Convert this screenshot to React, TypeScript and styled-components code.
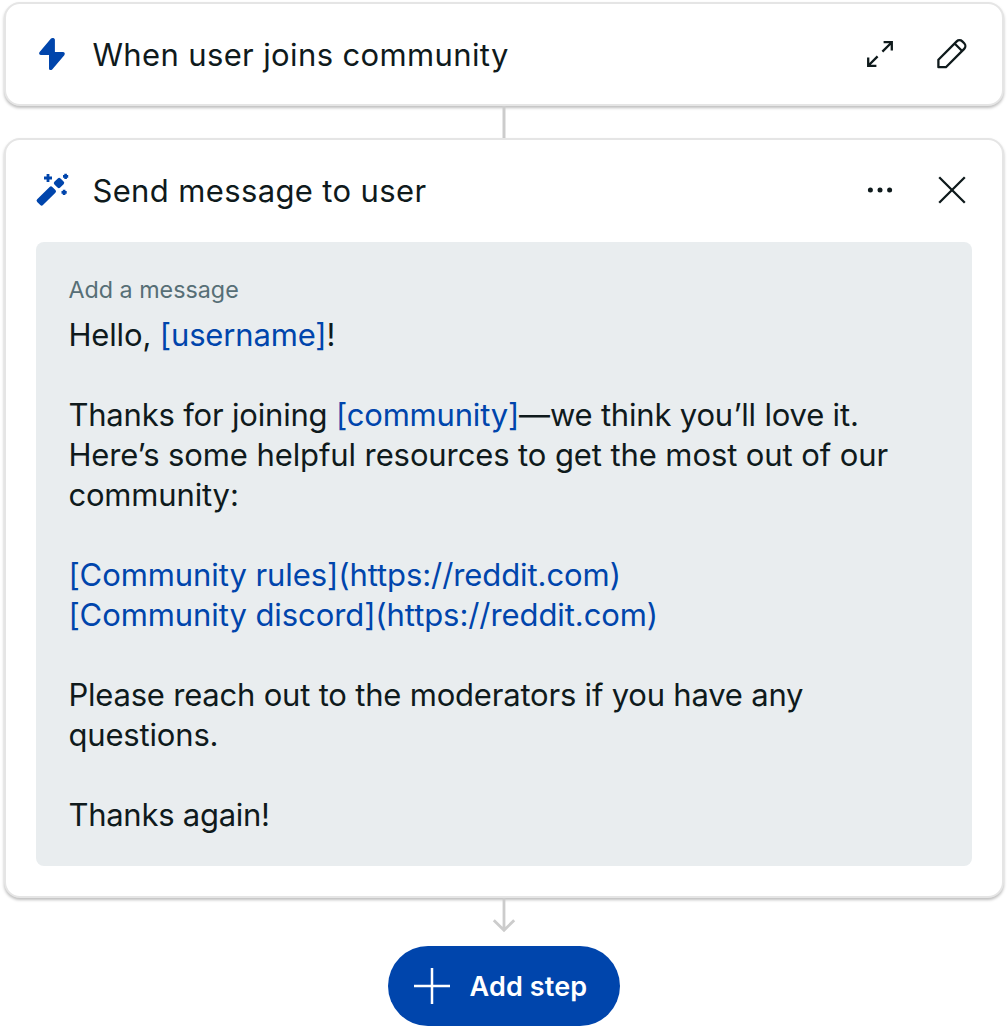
import React from 'react';
import styled, { createGlobalStyle } from 'styled-components';

const BLUE = '#0045ac';
const INK = '#0f1a1c';

const GlobalStyle = createGlobalStyle`
  *, *::before, *::after { box-sizing: border-box; }
  body { margin: 0; background: #fff; overflow: hidden; }
`;

const Flow = styled.main`
  width: 1008px;
  height: 1026px;
  padding: 2px 4px 0;
  display: flex;
  flex-direction: column;
  align-items: center;
  font-family: Inter, 'Liberation Sans', sans-serif;
  color: ${INK};
`;

const Card = styled.section<{ $height: number }>`
  width: 1000px;
  height: ${p => p.$height}px;
  flex: none;
  padding: 0 30px;
  border: 2px solid #e5e5e5;
  border-radius: 16px;
  background: #fff;
  box-shadow: 0 2px 3px rgba(0, 0, 0, 0.26);
`;

const CardHeader = styled.header`
  height: 100px;
  padding-right: 4px;
  display: flex;
  align-items: center;
`;

const Title = styled.h2`
  flex: 1;
  margin: 0 0 0 24.4px;
  padding-top: 2px;
  font-size: 31px;
  line-height: 40px;
  font-weight: 400;
  letter-spacing: 0.37px;
  white-space: nowrap;
`;

const Actions = styled.div`
  display: flex;
  gap: 40px;
`;

const IconButton = styled.button`
  width: 32px;
  height: 32px;
  padding: 0;
  border: 0;
  background: none;
  color: ${INK};
`;

const Icon = styled.svg`
  display: block;
  flex: none;
  overflow: visible;
`;

const Message = styled.div`
  height: 624px;
  margin-top: 2px;
  padding: 32px 32px 32px 32.4px;
  border-radius: 8px;
  background: #e9edef;
`;

const Label = styled.div`
  height: 32px;
  margin-bottom: 9px;
  color: #576f76;
  font-size: 23.3px;
  line-height: 32px;
`;

const Line = styled.div<{ $spacing?: number; $link?: boolean }>`
  height: 40px;
  font-size: 31px;
  line-height: 40px;
  letter-spacing: ${p => p.$spacing ?? 0}px;
  color: ${p => (p.$link ? BLUE : 'inherit')};
  white-space: nowrap;
`;

const Token = styled.span`
  color: ${BLUE};
`;

const ConnectorSlot = styled.div`
  height: 32px;
  flex: none;
`;

const ArrowSlot = styled.div`
  height: 48px;
  flex: none;
`;

const AddButton = styled.button`
  width: 232px;
  height: 80px;
  flex: none;
  display: flex;
  align-items: center;
  gap: 19.5px;
  padding: 0 0 0 26px;
  border: 0;
  border-radius: 40px;
  background: ${BLUE};
  color: #fff;
  font: 600 27px/36px Inter, 'Liberation Sans', sans-serif;
  letter-spacing: 0.15px;
  white-space: nowrap;
`;

const ButtonText = styled.span`
  padding-top: 2px;
`;

const Bolt = () => (
  <Icon width="32" height="32" viewBox="0 0 32 32" fill={BLUE}>
    <path d="M15 .6 3.600 14C2.500 15.300 3.300 17 5 17h8v13.500c0 1.700 2.100 2.100 3.200.9l12.100-14.200c1.100-1.400.3-3.200-1.400-3.200h-8V1.700C18.900 0 16.100-.7 15 .6Z" />
  </Icon>
);

const Wand = () => (
  <Icon width="32" height="32" viewBox="0 0 32 32" fill={BLUE}>
    <rect x="-4.100" y="-10.700" width="8.200" height="21.400" rx="1.900" transform="translate(10.300 22) rotate(45)" />
    <rect x="-4.100" y="-4.300" width="8.200" height="8.600" rx="1.900" transform="translate(23 9) rotate(45)" />
    <path d="M10.600 0h2.800v2.600H16v2.800h-2.600V8h-2.800V5.400H8V2.600h2.600ZM28.300-.2h2.600v1.300h1.300v2.600h-1.300V5h-2.600V3.700H27V1.100h1.300ZM26.800 15.800h2.600v1.300h1.300v2.600h-1.300V21h-2.600v-1.300h-1.300v-2.600h1.300Z" />
  </Icon>
);

const Expand = () => (
  <Icon width="32" height="32" viewBox="0 0 32 32" fill="none" stroke="currentColor" strokeWidth="2.300">
    <path d="M18.400 13.600 27.800 4.200M19.600 4.200h8.200v8.200M13.600 18.400 4.200 27.800M12.400 27.800H4.200v-8.200" />
  </Icon>
);

const Pencil = () => (
  <Icon width="32" height="32" viewBox="0 0 32 32" fill="none" stroke="currentColor" strokeWidth="2.300" strokeLinejoin="round">
    <path d="M2.400 29.200V21.700L20.700 3.400a4 4 0 0 1 5.600 0l1.900 1.900a4 4 0 0 1 0 5.600L9.900 29.200ZM18.600 5.500l7.500 7.500" />
  </Icon>
);

const More = () => (
  <Icon width="32" height="32" viewBox="0 0 32 32" fill="currentColor">
    <circle cx="6.400" cy="16" r="2.500" />
    <circle cx="16" cy="16" r="2.500" />
    <circle cx="25.600" cy="16" r="2.500" />
  </Icon>
);

const Close = () => (
  <Icon width="32" height="32" viewBox="0 0 32 32" fill="none" stroke="currentColor" strokeWidth="2.300">
    <path d="m3.200 3.200 25.600 25.600M28.800 3.200 3.200 28.800" />
  </Icon>
);

export default function App() {
  return (
    <>
      <GlobalStyle />
      <Flow>
        <Card $height={104}>
          <CardHeader>
            <Bolt />
            <Title>When user joins community</Title>
            <Actions>
              <IconButton aria-label="Expand"><Expand /></IconButton>
              <IconButton aria-label="Edit"><Pencil /></IconButton>
            </Actions>
          </CardHeader>
        </Card>
        <ConnectorSlot>
          <Icon width="24" height="32" viewBox="0 0 24 32" stroke="#ccc" strokeWidth="3">
            <path d="M12 0v32" />
          </Icon>
        </ConnectorSlot>
        <Card $height={760}>
          <CardHeader>
            <Wand />
            <Title>Send message to user</Title>
            <Actions>
              <IconButton aria-label="More"><More /></IconButton>
              <IconButton aria-label="Close"><Close /></IconButton>
            </Actions>
          </CardHeader>
          <Message>
            <Label>Add a message</Label>
            <Line $spacing={-0.14}>Hello, <Token>[username]</Token>!</Line>
            <Line />
            <Line $spacing={-0.19}>Thanks for joining <Token>[community]</Token>—we think you’ll love it.</Line>
            <Line $spacing={-0.1}>Here’s some helpful resources to get the most out of our</Line>
            <Line $spacing={-0.16}>community:</Line>
            <Line />
            <Line $link $spacing={-0.08}>[Community rules](https://reddit.com)</Line>
            <Line $link $spacing={-0.08}>[Community discord](https://reddit.com)</Line>
            <Line />
            <Line $spacing={-0.2}>Please reach out to the moderators if you have any</Line>
            <Line $spacing={-0.16}>questions.</Line>
            <Line />
            <Line $spacing={-0.26}>Thanks again!</Line>
          </Message>
        </Card>
        <ArrowSlot>
          <Icon width="24" height="48" viewBox="0 0 24 48" fill="none" stroke="#ccc" strokeWidth="2.800">
            <path d="M12 0v32M1.800 22.200 12 32.300l10.200-10.100" />
          </Icon>
        </ArrowSlot>
        <AddButton>
          <Icon width="36" height="36" viewBox="0 0 36 36" stroke="#fff" strokeWidth="2.500">
            <path d="M18 0v36M0 18h36" />
          </Icon>
          <ButtonText>Add step</ButtonText>
        </AddButton>
      </Flow>
    </>
  );
}
